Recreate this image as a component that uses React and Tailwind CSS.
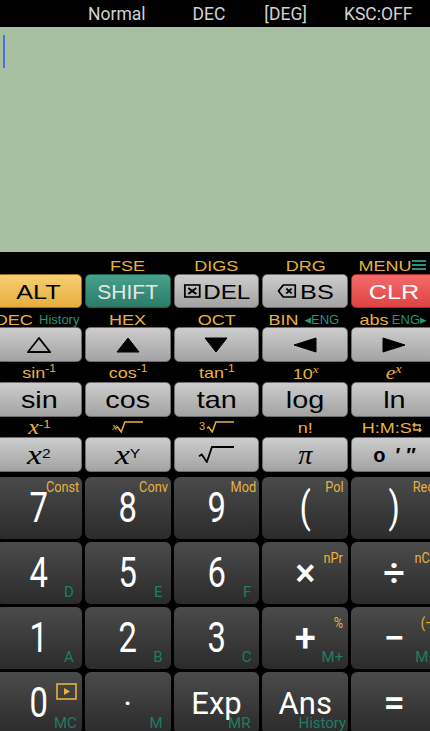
import React from 'react'

// colours used for the shifted / alpha legends
const gold = 'text-[#e8b23e]'
const teal = 'text-[#2a9077]'
const tealDark = 'text-[#1f7c64]'

// text on this keypad is drawn a little wider than the font
function Sx({ children, className = '' }) {
  return <span className={`inline-block scale-x-[1.2] ${className}`}>{children}</span>
}

function Tri({ dir, outline }) {
  const pts = {
    up: '1,15 12,1 23,15',
    down: '1,1 12,15 23,1',
    left: '1,8 23,1 23,15',
    right: '1,1 23,8 1,15',
  }
  return (
    <svg width="24" height="16" viewBox="0 0 24 16">
      <polygon
        points={pts[dir]}
        fill={outline ? 'none' : 'black'}
        stroke="black"
        strokeWidth={outline ? 1.8 : 1}
        strokeLinejoin="miter"
      />
    </svg>
  )
}

function Radical({ w = 36, h = 17, color = 'black', sw = 1.8 }) {
  return (
    <svg width={w} height={h} viewBox={`0 0 ${w} ${h}`}>
      <path
        d={`M1 ${h * 0.6} L${h * 0.22} ${h * 0.5} L${h * 0.52} ${h - 1} L${h * 0.82} 1 H${w}`}
        fill="none"
        stroke={color}
        strokeWidth={sw}
      />
    </svg>
  )
}

function LabelRow({ h, items }) {
  return (
    <div className={`grid grid-cols-5 gap-x-[3px] ${h}`}>
      {items.map((it, i) => (
        <div key={i} className="flex items-center justify-center leading-none whitespace-nowrap overflow-visible">
          {it}
        </div>
      ))}
    </div>
  )
}

const tones = {
  gray: 'from-[#cdcdcd] to-[#a3a3a3] text-black border-[#6e6e6e]',
  alt: 'from-[#f7cf72] to-[#e6ad3c] text-black border-[#9a7020]',
  shift: 'from-[#46a28c] to-[#2c7b68] text-[#e6e6e6] border-[#1f5a4b]',
  clr: 'from-[#f46a6a] to-[#e04242] text-white border-[#a02a2a]',
}

function FnKey({ children, tone = 'gray' }) {
  return (
    <div className={`flex items-center justify-center rounded-[5px] border bg-linear-to-b leading-none ${tones[tone]}`}>
      {children}
    </div>
  )
}

function KeyRow({ h, keys }) {
  return (
    <div className={`grid grid-cols-5 gap-x-[3px] ${h}`}>
      {keys}
    </div>
  )
}

function NumKey({ children, top, bottom, topPos = 'right-[3px] top-[3px]', bottomPos = 'right-[8px] bottom-[4px]' }) {
  return (
    <div className="relative flex items-center justify-center rounded-[6px] bg-linear-to-b from-[#4b4b4b] to-[#2b2b2b] text-white font-['Roboto',sans-serif] leading-none">
      {children}
      {top && (
        <span className={`absolute ${topPos} text-[15px] leading-none origin-right scale-x-[0.85] ${gold}`}>{top}</span>
      )}
      {bottom && <span className={`absolute ${bottomPos} text-[15px] leading-none ${tealDark}`}>{bottom}</span>}
    </div>
  )
}

const Digit = ({ children }) => (
  <span className="inline-block scale-x-[0.78] text-[42px]">{children}</span>
)

const Op = ({ children }) => (
  <span className="text-[38px] font-medium">{children}</span>
)

export default function App() {
  const lbl = "font-['Liberation_Sans','DejaVu_Sans',sans-serif] text-[15px]"
  const serifI = "font-['Liberation_Serif',serif] italic"

  return (
    <div className="w-[430px] h-[731px] overflow-hidden bg-black font-['Liberation_Sans','DejaVu_Sans',sans-serif]">
      {/* status line */}
      <div className="h-[27px] pt-[2px] flex items-center text-[17.5px] text-[#d2d2d2] font-['Roboto',sans-serif] whitespace-nowrap">
        <span className="ml-[88px]">Normal</span>
        <span className="ml-[47px]">DEC</span>
        <span className="ml-[39px]">[DEG]</span>
        <span className="ml-[37px]">KSC:OFF</span>
      </div>

      {/* LCD */}
      <div className="h-[225px] bg-[#a8bfa2] pt-[8px] pl-[3px]">
        <div className="w-[2px] h-[33px] bg-[#4a72d4]" />
      </div>

      {/* keypad: a bit wider than the screen, both outer columns are clipped */}
      <div className="-ml-[4px] w-[441px]">
        <LabelRow
          h="h-[22px] pt-[4px]"
          items={[
            null,
            <Sx className={`${lbl} ${gold}`}>FSE</Sx>,
            <Sx className={`${lbl} ${gold}`}>DIGS</Sx>,
            <Sx className={`${lbl} ${gold}`}>DRG</Sx>,
            <span className="flex items-center">
              <Sx className={`${lbl} ${gold} mr-[5px]`}>MENU</Sx>
              <svg width="14" height="12" viewBox="0 0 14 12">
                <path d="M0 2H14M0 6H14M0 10H14" stroke="#2a9077" strokeWidth="2" />
              </svg>
            </span>,
          ]}
        />
        <KeyRow
          h="h-[34px]"
          keys={[
            <FnKey key="a" tone="alt"><Sx className="text-[21px]">ALT</Sx></FnKey>,
            <FnKey key="s" tone="shift"><span className="text-[21px]">SHIFT</span></FnKey>,
            <FnKey key="d">
              <span className="flex items-center gap-[2px] scale-x-[1.15]">
                <svg width="15" height="14" viewBox="0 0 15 14">
                  <rect x="1" y="1" width="13" height="12" fill="none" stroke="black" strokeWidth="1.6" />
                  <path d="M4 4L11 10M11 4L4 10" stroke="black" strokeWidth="1.8" />
                </svg>
                <span className="text-[21px]">DEL</span>
              </span>
            </FnKey>,
            <FnKey key="b">
              <span className="flex items-center gap-[3px] scale-x-[1.2]">
                <svg width="16" height="14" viewBox="0 0 16 14">
                  <path d="M5 1H15V13H5L1 7Z" fill="none" stroke="black" strokeWidth="1.5" strokeLinejoin="round" />
                  <path d="M7.5 4.5L12 9.5M12 4.5L7.5 9.5" stroke="black" strokeWidth="1.7" />
                </svg>
                <span className="text-[21px]">BS</span>
              </span>
            </FnKey>,
            <FnKey key="c" tone="clr"><Sx className="text-[21px]">CLR</Sx></FnKey>,
          ]}
        />

        <LabelRow
          h="h-[19px] pt-[3px]"
          items={[
            <span className="flex items-center">
              <Sx className={`${lbl} ${gold} mr-[9px]`}>DEC</Sx>
              <span className={`text-[13px] ${teal}`}>History</span>
            </span>,
            <Sx className={`${lbl} ${gold}`}>HEX</Sx>,
            <Sx className={`${lbl} ${gold}`}>OCT</Sx>,
            <span className="flex items-center">
              <Sx className={`${lbl} ${gold} mr-[8px]`}>BIN</Sx>
              <span className={`text-[13px] ${teal}`}>◂ENG</span>
            </span>,
            <span className="flex items-center">
              <Sx className={`${lbl} ${gold} mr-[6px]`}>abs</Sx>
              <span className={`text-[13px] ${teal}`}>ENG▸</span>
            </span>,
          ]}
        />
        <KeyRow
          h="h-[35px]"
          keys={[
            <FnKey key="1"><Tri dir="up" outline /></FnKey>,
            <FnKey key="2"><Tri dir="up" /></FnKey>,
            <FnKey key="3"><Tri dir="down" /></FnKey>,
            <FnKey key="4"><Tri dir="left" /></FnKey>,
            <FnKey key="5"><Tri dir="right" /></FnKey>,
          ]}
        />

        <LabelRow
          h="h-[20px]"
          items={[
            <Sx className={`${lbl} ${gold}`}>sin<span className="align-super text-[10px]">-1</span></Sx>,
            <Sx className={`${lbl} ${gold}`}>cos<span className="align-super text-[10px]">-1</span></Sx>,
            <Sx className={`${lbl} ${gold}`}>tan<span className="align-super text-[10px]">-1</span></Sx>,
            <Sx className={`${lbl} ${gold}`}>10<span className={`align-super text-[11px] ${serifI}`}>x</span></Sx>,
            <Sx className={`${lbl} ${gold}`}><span className={`text-[18px] ${serifI}`}>e</span><span className={`align-super text-[12px] ${serifI}`}>x</span></Sx>,
          ]}
        />
        <KeyRow
          h="h-[35px]"
          keys={[
            <FnKey key="1"><Sx className="text-[24px]">sin</Sx></FnKey>,
            <FnKey key="2"><Sx className="text-[24px]">cos</Sx></FnKey>,
            <FnKey key="3"><Sx className="text-[24px]">tan</Sx></FnKey>,
            <FnKey key="4"><Sx className="text-[24px]">log</Sx></FnKey>,
            <FnKey key="5"><Sx className="text-[24px]">ln</Sx></FnKey>,
          ]}
        />

        <LabelRow
          h="h-[20px]"
          items={[
            <Sx className={gold}><span className={`text-[20px] ${serifI}`}>x</span><span className="align-super text-[11px]">-1</span></Sx>,
            <span className={`flex items-start ${gold}`}>
              <span className={`text-[11px] -mr-[2px] ${serifI}`}>x</span>
              <Radical w={28} h={12} color="#e8b23e" sw={1.5} />
            </span>,
            <span className={`flex items-start ${gold}`}>
              <span className="text-[11px] mr-[1px]">3</span>
              <Radical w={28} h={12} color="#e8b23e" sw={1.5} />
            </span>,
            <Sx className={`${lbl} ${gold}`}>n!</Sx>,
            <span className="flex items-center">
              <Sx className={`${lbl} ${gold} mr-[4px]`}>H:M:S</Sx>
              <svg width="10" height="11" viewBox="0 0 10 11">
                <path d="M3 1L1 3L3 5M1 3H8V5M7 6L9 8L7 10M9 8H2V6" fill="none" stroke="#e8b23e" strokeWidth="1.5" />
              </svg>
            </span>,
          ]}
        />
        <KeyRow
          h="h-[35px]"
          keys={[
            <FnKey key="1"><Sx><span className={`text-[28px] ${serifI}`}>x</span><span className="align-super text-[13px]">2</span></Sx></FnKey>,
            <FnKey key="2"><Sx><span className={`text-[28px] ${serifI}`}>x</span><span className="align-super text-[13px]">Y</span></Sx></FnKey>,
            <FnKey key="3"><Radical w={36} h={17} /></FnKey>,
            <FnKey key="4"><span className={`text-[28px] ${serifI}`}>π</span></FnKey>,
            <FnKey key="5">
              <span className="flex items-center text-[20px] font-bold">
                <span>o</span>
                <span className="italic ml-[9px]">′</span>
                <span className="italic ml-[6px]">″</span>
              </span>
            </FnKey>,
          ]}
        />

        {/* main number pad */}
        <div className="grid grid-cols-5 gap-x-[3px] gap-y-[3px] mt-[5px] auto-rows-[62px]">
          <NumKey top="Const"><Digit>7</Digit></NumKey>
          <NumKey top="Conv"><Digit>8</Digit></NumKey>
          <NumKey top="Mod"><Digit>9</Digit></NumKey>
          <NumKey top="Pol" topPos="right-[5px] top-[3px]"><Digit>(</Digit></NumKey>
          <NumKey top="Rec" topPos="right-[3px] top-[3px]"><Digit>)</Digit></NumKey>

          <NumKey bottom="D"><Digit>4</Digit></NumKey>
          <NumKey bottom="E"><Digit>5</Digit></NumKey>
          <NumKey bottom="F"><Digit>6</Digit></NumKey>
          <NumKey top="nPr" topPos="right-[5px] top-[9px]"><Op>×</Op></NumKey>
          <NumKey top="nCr" topPos="right-[3px] top-[9px]"><Op>÷</Op></NumKey>

          <NumKey bottom="A"><Digit>1</Digit></NumKey>
          <NumKey bottom="B"><Digit>2</Digit></NumKey>
          <NumKey bottom="C"><Digit>3</Digit></NumKey>
          <NumKey top="%" topPos="right-[5px] top-[9px]" bottom="M+" bottomPos="right-[5px] bottom-[4px]"><Op>+</Op></NumKey>
          <NumKey top="(−)" topPos="right-[0px] top-[9px]" bottom="M−" bottomPos="right-[0px] bottom-[4px]"><Op>−</Op></NumKey>

          <div className="relative flex items-center justify-center rounded-[6px] bg-linear-to-b from-[#4b4b4b] to-[#2b2b2b] text-white font-['Roboto',sans-serif] leading-none">
            <Digit>0</Digit>
            <svg className="absolute right-[5px] top-[11px]" width="21" height="17" viewBox="0 0 21 17">
              <rect x="1" y="1" width="19" height="15" fill="none" stroke="#e8b23e" strokeWidth="1.6" />
              <path d="M8 5L14 8.5L8 12Z" fill="#e8b23e" />
            </svg>
            <span className={`absolute right-[5px] bottom-[3px] text-[15px] leading-none ${tealDark}`}>MC</span>
          </div>
          <NumKey bottom="M" bottomPos="right-[8px] bottom-[3px]"><span className="text-[34px]">·</span></NumKey>
          <NumKey bottom="MR" bottomPos="right-[9px] bottom-[3px]"><span className="text-[31px]">Exp</span></NumKey>
          <NumKey bottom="History" bottomPos="right-[2px] bottom-[3px]"><span className="text-[31px]">Ans</span></NumKey>
          <NumKey><Op>=</Op></NumKey>
        </div>
      </div>
    </div>
  )
}
